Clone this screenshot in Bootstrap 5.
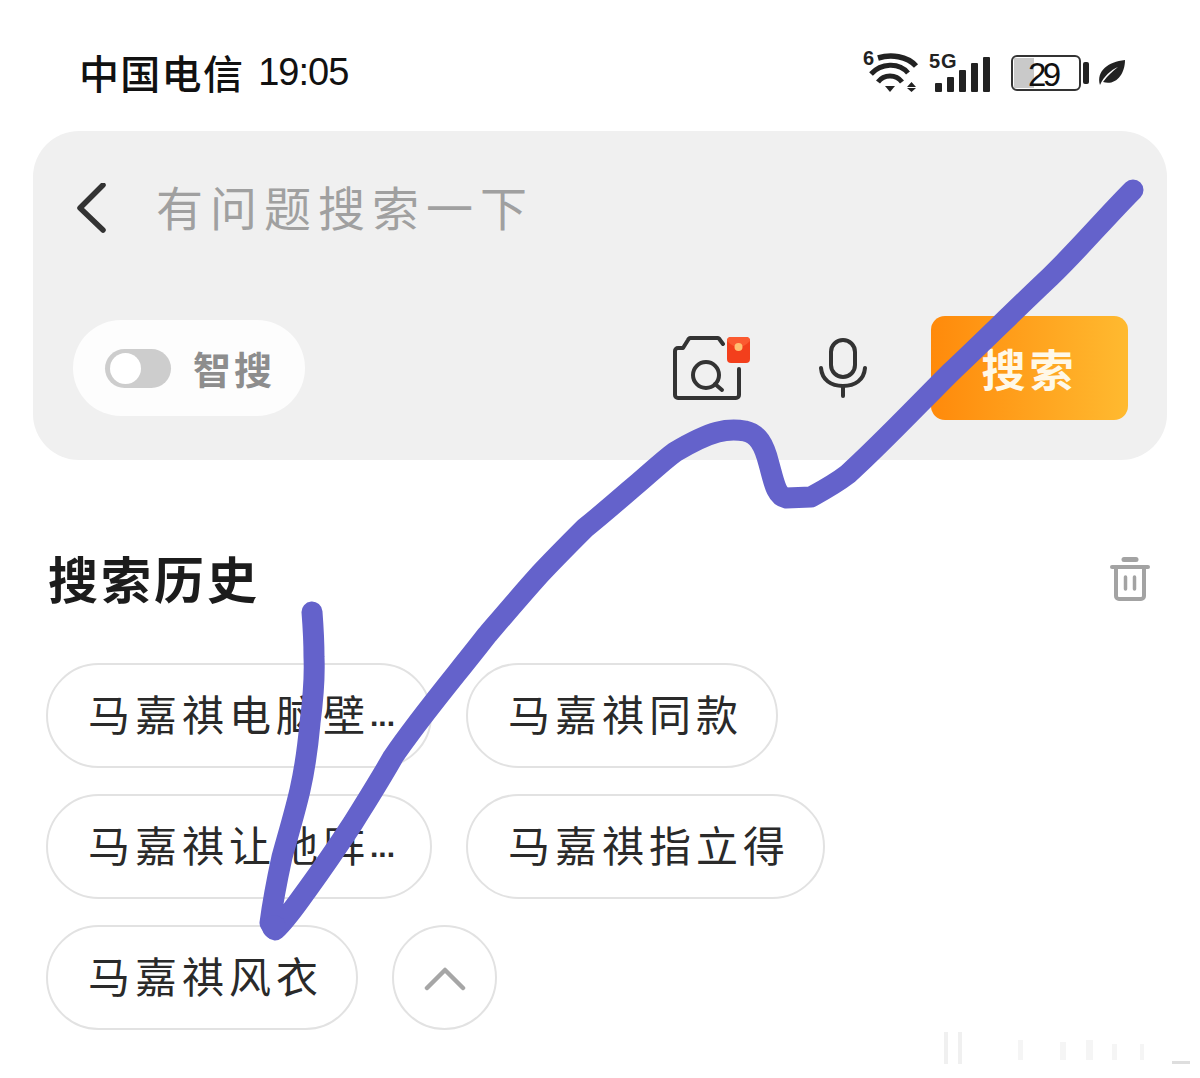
<!DOCTYPE html>
<html lang="zh">
<head>
<meta charset="utf-8">
<title>搜索</title>
<link rel="stylesheet" href="https://cdn.jsdelivr.net/npm/bootstrap@5.3.0/dist/css/bootstrap.min.css">
<style>
html,body{height:1078px;overflow:hidden;background:#fff}
body{font-family:"Noto Sans CJK SC","Noto Sans",sans-serif;color:#222;position:relative}
.shot{width:1200px;height:1078px}
.statusrow{height:131px;padding:13px 67px 0 79px}
.carrier{font-size:40px;line-height:1;letter-spacing:1.3px;color:#111;font-weight:500}
.clock{font-family:"Liberation Sans",sans-serif;font-size:38px;margin-left:14px;letter-spacing:-1px}
.searchbox{margin:0 33px;height:329px;background:#f0f0f0;border-radius:46px;padding:51px 39px 40px 40px}
.backicon{margin-left:1px}
.hint{font-size:47px;line-height:1;letter-spacing:7px;color:#a0a0a0;margin-left:46px;margin-bottom:5px}
.toolrow{margin-top:82px}
.smartpill{width:232px;height:96px;background:#fdfdfd;border-radius:48px;padding-left:32px;gap:22px}
.sw{width:66px;height:39px;border-radius:20px;background:#cdcdcd;padding:4px 5px}
.sw i{display:block;width:31px;height:31px;border-radius:50%;background:#fff}
.smartlabel{font-size:38px;line-height:1;color:#8d8d8d;letter-spacing:3px;font-weight:700}
.gobtn{width:197px;height:104px;border-radius:14px;background:linear-gradient(90deg,#ff8a0b,#ffba30);color:#fff8e8;font-size:44px;font-weight:700;letter-spacing:4px;border:0;margin-left:64px}
.micwrap{margin-left:68px}
.histhead{padding:92px 48px 0 48px;height:203px}
.histtitle{font-size:50px;line-height:1;letter-spacing:3px;font-weight:700;color:#1c1c1c;margin:0}
.trashicon{margin:5px 2px 0 0}
.chiplist{padding:0 46px;gap:26px}
.chiprow{gap:34px}
.tagchip{height:105px;border:2px solid #e2e2e2;border-radius:53px;padding:0 33px 6px 40px;font-size:42px;line-height:1;letter-spacing:5px;color:#2a2a2a;background:#fff}
.tagchip.cutchip{padding-right:35px}
.tagchip.roundchip{width:105px;padding:0;justify-content:center}
.dots{font-family:"Liberation Sans",sans-serif;font-size:30px;letter-spacing:0;font-weight:700;margin-top:6px}
.overlay{position:absolute;left:0;top:0;pointer-events:none}
</style>
</head>
<body>
<div class="shot">
  <div class="statusrow d-flex align-items-center justify-content-between">
    <div class="carrier d-flex align-items-center"><span>中国电信</span><span class="clock">19:05</span></div>
    <svg width="270" height="48" viewBox="0 -3 270 48" class="d-block">
      <text x="0" y="14" font-family="Liberation Sans" font-weight="700" font-size="20" fill="#222">6</text>
      <g fill="none" stroke="#222">
        <path d="M15 7 C28 3 44 5 53 15" stroke-width="5.5"/>
        <path d="M8 23 C18 12 36 11 45 22" stroke-width="5"/>
        <path d="M15 31 C21 23 33 23 39 31" stroke-width="5"/>
      </g>
      <path d="M22 35 H32 L27 41Z" fill="#222"/>
      <path d="M44 36 L48.5 31 L53 36ZM44 37 L48.5 41 L53 37Z" fill="#222"/>
      <text x="66" y="17" font-family="Liberation Sans" font-weight="700" font-size="20" letter-spacing="1" fill="#222">5G</text>
      <rect x="72" y="32" width="7" height="9" rx="1" fill="#222"/>
      <rect x="84" y="26" width="7" height="15" rx="1" fill="#222"/>
      <rect x="96" y="19" width="7" height="22" rx="1" fill="#222"/>
      <rect x="108" y="12" width="7" height="29" rx="1" fill="#222"/>
      <rect x="120" y="6" width="7" height="35" rx="1" fill="#222"/>
      <rect x="149" y="5" width="68" height="34" rx="5" fill="#fff" stroke="#333" stroke-width="2"/>
      <path d="M151 7h20v30h-20z" fill="#c9c9c9"/>
      <text x="165" y="35" font-family="Liberation Sans" font-size="33" fill="#111" textLength="33">29</text>
      <rect x="220" y="11" width="6" height="22" rx="2" fill="#222"/>
      <path d="M237 34 C233 20 245 11 262 9 C262 24 252 35 240 31 C245 24 250 20 255 16 C248 19 241 25 237 34Z" fill="#222"/>
    </svg>
  </div>

  <div class="searchbox">
    <div class="d-flex align-items-center">
      <svg width="36" height="50" viewBox="0 0 36 50" class="backicon"><path d="M29 2 L6 25 L29 47" fill="none" stroke="#333" stroke-width="5.5" stroke-linecap="round" stroke-linejoin="round"/></svg>
      <span class="hint">有问题搜索一下</span>
    </div>
    <div class="toolrow d-flex align-items-center">
      <div class="smartpill d-flex align-items-center">
        <div class="sw"><i></i></div>
        <span class="smartlabel">智搜</span>
      </div>
      <div class="ms-auto">
        <svg width="78" height="64" viewBox="0 0 78 64" class="d-block">
          <path d="M65 32 V58 a3 3 0 0 1-3 3 H4 a3 3 0 0 1-3-3 V14 a3 3 0 0 1 3-3 H9 L14 3 a3 3 0 0 1 3-2 H43 a3 3 0 0 1 3 2 L49 7" fill="none" stroke="#333" stroke-width="4" stroke-linecap="round" stroke-linejoin="round" transform="translate(1 1)"/>
          <circle cx="33" cy="39" r="13" fill="none" stroke="#333" stroke-width="4"/>
          <path d="M42 48l7 6" stroke="#333" stroke-width="4" stroke-linecap="round"/>
          <rect x="54" y="1" width="23" height="26" rx="4" fill="#f33f1c"/>
          <path d="M54 5 Q65.5 17 77 5 a4 4 0 0 0-4-4 H58 a4 4 0 0 0-4 4Z" fill="#fb5a30"/>
          <circle cx="65.500" cy="11" r="4" fill="#ffbf70"/>
        </svg>
      </div>
      <div class="micwrap">
        <svg width="48" height="60" viewBox="0 0 48 60" class="d-block">
          <rect x="12" y="2" width="24" height="37" rx="12" fill="none" stroke="#333" stroke-width="4"/>
          <path d="M2 30 C3 42 12 48 24 48 C36 48 45 42 46 30" fill="none" stroke="#333" stroke-width="4" stroke-linecap="round"/>
          <path d="M24 48 V58" stroke="#333" stroke-width="4" stroke-linecap="round"/>
        </svg>
      </div>
      <button class="gobtn" type="button">搜索</button>
    </div>
  </div>

  <div class="histhead d-flex justify-content-between align-items-start">
    <h2 class="histtitle">搜索历史</h2>
    <svg width="40" height="44" viewBox="0 0 40 44" class="trashicon">
      <g fill="none" stroke="#a3a3a3" stroke-linecap="round" stroke-linejoin="round">
        <path d="M14 2.500 H26" stroke-width="5"/>
        <path d="M2 10 H38" stroke-width="4"/>
        <path d="M6 10 V39 a3 3 0 0 0 3 3 H31 a3 3 0 0 0 3-3 V10" stroke-width="4"/>
        <path d="M15.500 20 V32 M24.500 20 V32" stroke-width="3.500"/>
      </g>
    </svg>
  </div>

  <div class="chiplist d-flex flex-column">
    <div class="chiprow d-flex">
      <div class="tagchip cutchip d-flex align-items-center">马嘉祺电脑壁<span class="dots">...</span></div>
      <div class="tagchip d-flex align-items-center">马嘉祺同款</div>
    </div>
    <div class="chiprow d-flex">
      <div class="tagchip cutchip d-flex align-items-center">马嘉祺让地阵<span class="dots">...</span></div>
      <div class="tagchip d-flex align-items-center">马嘉祺指立得</div>
    </div>
    <div class="chiprow d-flex">
      <div class="tagchip d-flex align-items-center">马嘉祺风衣</div>
      <div class="tagchip roundchip d-flex align-items-center">
        <svg width="42" height="26" viewBox="0 0 42 26"><path d="M3 23 L21 5 L39 23" fill="none" stroke="#a6a6a6" stroke-width="4.500" stroke-linecap="round" stroke-linejoin="round"/></svg>
      </div>
    </div>
  </div>
</div>

<svg class="overlay" width="1200" height="1078" viewBox="0 0 1200 1078">
  <path d="M1133 190 C1105 218 1080 248 1050 277 C1015 310 985 340 950 373 C915 408 880 445 848 474 C835 484 822 491 811 497 L786 498 C776 496 774 482 769 464 C764 444 758 434 745 431 C728 428 712 430 675 452 C660 463 645 478 630 490 C615 503 600 516 585 528 C570 543 555 558 540 574 C522 594 505 614 487 635 C456 675 420 717 393 757 C380 780 366 802 353 823 C338 846 323 868 307 890 C296 905 286 920 275 930 L270 923 C273 900 277 880 282 857 C288 835 295 812 300 790 C305 768 308 745 310 723 C313 700 315 680 314 657 C314 640 313 625 312 612" fill="none" stroke="#6462cb" stroke-linecap="round" stroke-linejoin="round" stroke-width="21"/>
  <circle cx="274" cy="927" r="12" fill="#6462cb"/>
  <g fill="#000" opacity=".035">
    <rect x="1018" y="1040" width="5" height="20"/>
    <rect x="1060" y="1042" width="6" height="18"/>
    <rect x="1086" y="1040" width="7" height="20"/>
    <rect x="1112" y="1044" width="5" height="16"/>
    <rect x="1140" y="1044" width="4" height="16"/>
  </g>
  <rect x="944" y="1032" width="4" height="32" fill="#000" opacity=".06"/>
  <rect x="958" y="1032" width="4" height="32" fill="#000" opacity=".06"/>
  <rect x="1172" y="1061" width="18" height="3" fill="#000" opacity=".13"/>
</svg>
<script src="https://cdn.jsdelivr.net/npm/bootstrap@5.3.0/dist/js/bootstrap.bundle.min.js"></script>
</body>
</html>
